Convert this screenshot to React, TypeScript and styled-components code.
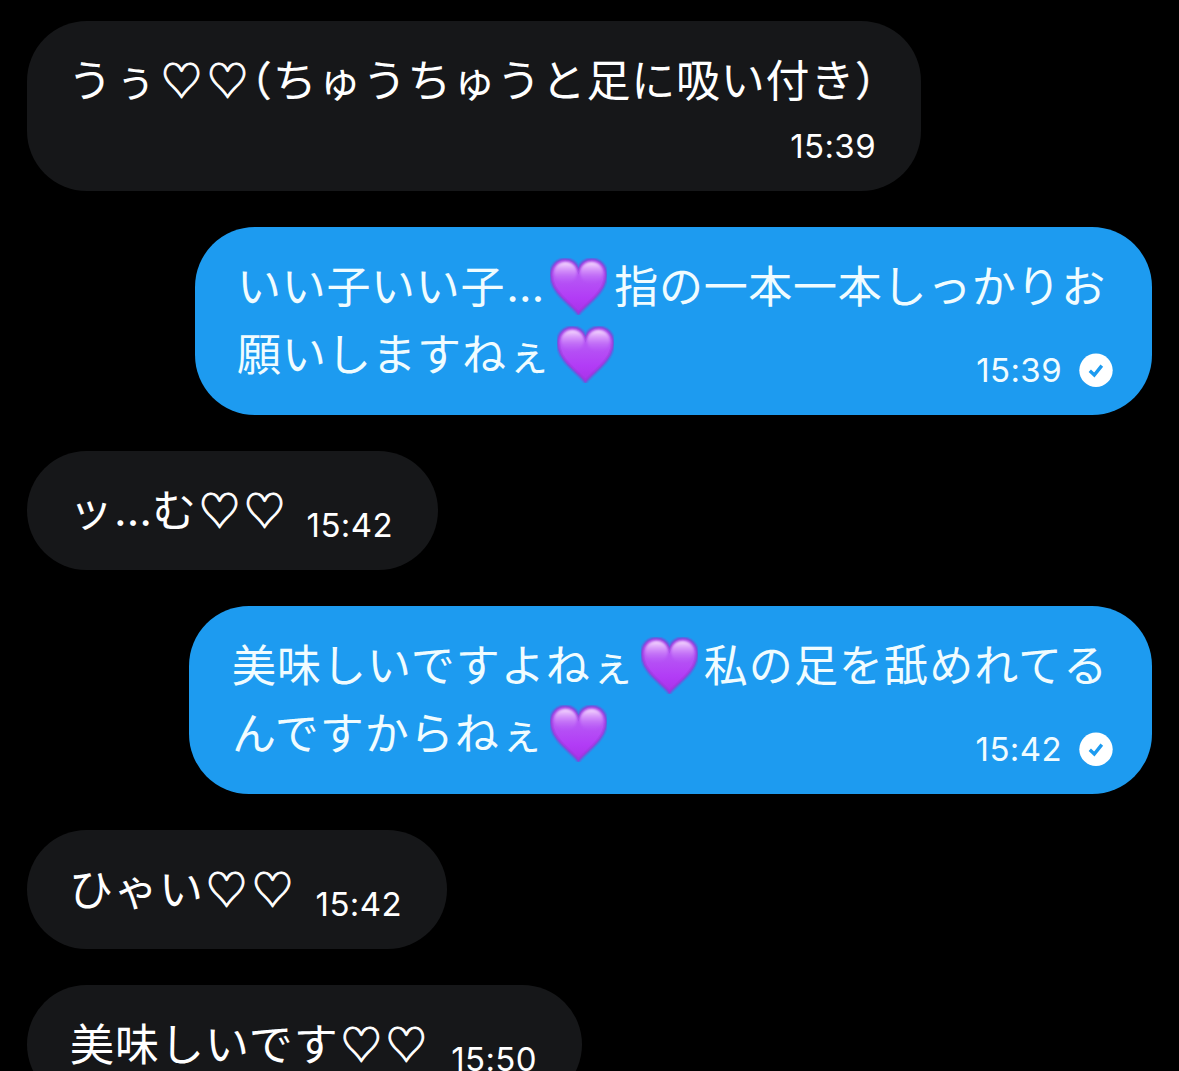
import React from "react";
import styled, { createGlobalStyle } from "styled-components";

const GlobalStyle = createGlobalStyle`
  html, body { margin: 0; background: #000; }
  body { overflow: hidden; }
`;

const Thread = styled.main`
  box-sizing: border-box;
  width: 1179px;
  height: 1071px;
  overflow: hidden;
  padding: 21px 27px 0;
  display: flex;
  flex-direction: column;
  gap: 36px;
  background: #000;
  font-family: "Noto Sans CJK JP", sans-serif;
`;

const Bubble = styled.article<{ $own?: boolean; $width: number; $height: number }>`
  box-sizing: border-box;
  flex: none;
  align-self: ${(p) => (p.$own ? "flex-end" : "flex-start")};
  width: ${(p) => p.$width}px;
  height: ${(p) => p.$height}px;
  padding: 25px ${(p) => (p.$own ? 39 : 45)}px 26px 42px;
  border-radius: 60px;
  background: ${(p) => (p.$own ? "#1d9bf0" : "#161719")};
  color: ${(p) => (p.$own ? "#f0fcff" : "#fff")};
  display: flex;
  flex-direction: column;
`;

const Row = styled.div`
  display: flex;
  justify-content: space-between;
  align-items: flex-end;
`;

const Line = styled.div`
  display: flex;
  align-items: center;
  height: 68px;
  line-height: 68px;
  font-size: 44px;
  white-space: pre;
`;

const Run = styled.span<{ $track?: number; $ml?: number }>`
  letter-spacing: ${(p) => p.$track ?? 1}px;
  margin-left: ${(p) => p.$ml ?? 0}px;
  margin-bottom: 4px;
`;

const Paren = styled(Run)`
  width: 22px;
  font-size: 41px;
  letter-spacing: 0;
  font-feature-settings: "halt";
  -webkit-text-stroke: 0.4px currentColor;
`;

const Dots = styled(Run)`
  font-family: Inter, sans-serif;
  margin-bottom: 0;
`;

const Hearts = styled(Run)`
  font-size: 41px;
  margin-bottom: 5px;
  -webkit-text-stroke: 1px currentColor;
`;

const Meta = styled.div<{ $lift?: number }>`
  display: flex;
  align-items: center;
  gap: 17px;
  height: 36px;
  margin-left: auto;
  margin-bottom: ${(p) => p.$lift ?? 0}px;
`;

const Time = styled.time`
  font-family: Inter, sans-serif;
  font-size: 33px;
  line-height: 36px;
  letter-spacing: 0.4px;
`;

const TimeRow = styled.div`
  display: flex;
  align-items: flex-end;
  height: 51px;
`;

const EmojiBox = styled.svg<{ $ml?: number; $mr?: number }>`
  flex: none;
  width: 57px;
  height: 57px;
  margin-top: 1px;
  margin-left: ${(p) => p.$ml ?? 0}px;
  margin-right: ${(p) => p.$mr ?? 0}px;
`;

const CheckIcon = styled.svg`
  display: block;
  width: 34px;
  height: 34px;
`;

function PurpleHeart({ id, ml, mr }: { id: string; ml?: number; mr?: number }) {
  const d =
    "M29 57 C26 53 20 48 13 41 C5 33 1 26 1 17 C1 8 7 1.500 15.500 1.500 C21.500 1.500 26.500 5 29 11 C31.500 5 36.500 1.500 42.500 1.500 C51 1.500 57 8 57 17 C57 26 53 33 45 41 C38 48 32 53 29 57 Z";
  return (
    <EmojiBox $ml={ml} $mr={mr} viewBox="0 0 58 58" role="img" aria-label="purple heart">
      <defs>
        <linearGradient id={id + "b"} x1="0" y1="0" x2="0" y2="1">
          <stop offset="0" stopColor="#b65cf0" />
          <stop offset="0.35" stopColor="#b655f5" />
          <stop offset="0.7" stopColor="#b23cf6" />
          <stop offset="1" stopColor="#a832e8" />
        </linearGradient>
        <linearGradient id={id + "h"} x1="0" y1="0" x2="0" y2="1">
          <stop offset="0" stopColor="#fbe6ff" stopOpacity="0.95" />
          <stop offset="0.35" stopColor="#ecc0ff" stopOpacity="0.6" />
          <stop offset="1" stopColor="#c070fa" stopOpacity="0" />
        </linearGradient>
        <filter id={id + "s"} x="-20%" y="-20%" width="140%" height="140%">
          <feGaussianBlur stdDeviation="1" />
        </filter>
      </defs>
      <path d={d} fill={"url(#" + id + "b)"} />
      <path d={d} fill="none" stroke="#9338d6" strokeOpacity="0.35" strokeWidth="4.500" />
      <g filter={"url(#" + id + "s)"}>
        <ellipse cx="15.700" cy="15" rx="11.500" ry="11" fill={"url(#" + id + "h)"} />
        <ellipse cx="42.300" cy="15" rx="11.500" ry="11" fill={"url(#" + id + "h)"} />
      </g>
      <path d={d} fill="none" stroke="#8f3ad6" strokeOpacity="0.5" strokeWidth="1.800" />
    </EmojiBox>
  );
}

function Sent() {
  return (
    <CheckIcon viewBox="0 0 34 34" aria-label="sent">
      <circle cx="17" cy="17.300" r="16.700" fill="#fff" />
      <path d="M10.800 17.800 L15.300 22 L22.800 12.600" fill="none" stroke="#1d9bf0" strokeWidth="3.400" />
    </CheckIcon>
  );
}

export default function App() {
  return (
    <>
      <GlobalStyle />
      <Thread lang="ja">
        <Bubble $width={894} $height={170}>
          <Line>
            <Run $ml={-1}>うぅ</Run>
            <Hearts $ml={3} $track={5}>♡♡</Hearts>
            <Paren $ml={-2}>（</Paren>
            <Run $ml={1} $track={0.8}>ちゅうちゅうと足に吸い付き</Run>
            <Paren>）</Paren>
          </Line>
          <TimeRow>
            <Meta $lift={1}>
              <Time>15:39</Time>
            </Meta>
          </TimeRow>
        </Bubble>

        <Bubble $own $width={957} $height={188}>
          <Line>
            <Run $track={0.7}>いい子いい子</Run>
            <Dots $ml={1}>…</Dots>
            <PurpleHeart id="a" ml={5} mr={7} />
            <Run $track={0.7}>指の一本一本しっかりお</Run>
          </Line>
          <Row>
            <Line>
              <Run>願いしますねぇ</Run>
              <PurpleHeart id="b" ml={5} />
            </Line>
            <Meta>
              <Time>15:39</Time>
              <Sent />
            </Meta>
          </Row>
        </Bubble>

        <Bubble $width={411} $height={119}>
          <Row>
            <Line>
              <Run>ッ</Run>
              <Dots>…</Dots>
              <Run $ml={-1}>む</Run>
              <Hearts $ml={2} $track={4}>♡♡</Hearts>
            </Line>
            <Meta $lift={1}>
              <Time>15:42</Time>
            </Meta>
          </Row>
        </Bubble>

        <Bubble $own $width={963} $height={188}>
          <Line>
            <Run $ml={1}>美味しいですよねぇ</Run>
            <PurpleHeart id="c" ml={5} mr={6} />
            <Run $track={1.1}>私の足を舐めれてる</Run>
          </Line>
          <Row>
            <Line>
              <Run $ml={1}>んですからねぇ</Run>
              <PurpleHeart id="d" ml={5} />
            </Line>
            <Meta>
              <Time>15:42</Time>
              <Sent />
            </Meta>
          </Row>
        </Bubble>

        <Bubble $width={420} $height={119}>
          <Row>
            <Line>
              <Run>ひゃい</Run>
              <Hearts $ml={2} $track={5}>♡♡</Hearts>
            </Line>
            <Meta $lift={1}>
              <Time>15:42</Time>
            </Meta>
          </Row>
        </Bubble>

        <Bubble $width={555} $height={119}>
          <Row>
            <Line>
              <Run $ml={1}>美味しいです</Run>
              <Hearts $ml={2} $track={4}>♡♡</Hearts>
            </Line>
            <Meta $lift={1}>
              <Time>15:50</Time>
            </Meta>
          </Row>
        </Bubble>
      </Thread>
    </>
  );
}
